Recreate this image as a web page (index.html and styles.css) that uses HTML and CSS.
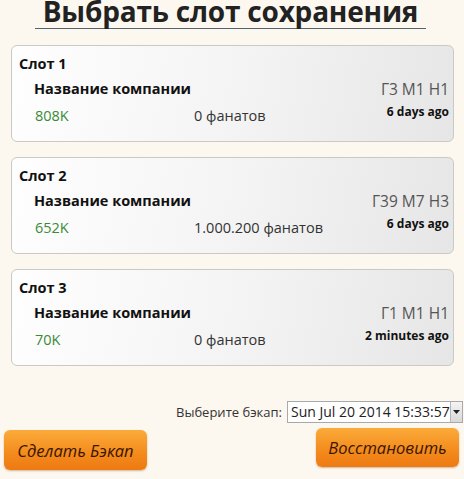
FILE: index.html
```html
<!DOCTYPE html>
<html lang="ru">
<head>
<meta charset="utf-8">
<link rel="stylesheet" href="styles.css">
</head>
<body>
<div class="page">
  <h1 class="title">Выбрать слот сохранения</h1>
  <div class="slots">
    <div class="slot">
      <div class="slot-name">Слот 1</div>
      <div class="row">
        <span class="company">Название компании</span>
        <span class="date">Г3 М1 Н1</span>
      </div>
      <div class="row stats">
        <span class="money">808K</span>
        <span class="fans">0 фанатов</span>
        <span class="ago">6 days ago</span>
      </div>
    </div>
    <div class="slot">
      <div class="slot-name">Слот 2</div>
      <div class="row">
        <span class="company">Название компании</span>
        <span class="date">Г39 М7 Н3</span>
      </div>
      <div class="row stats">
        <span class="money">652K</span>
        <span class="fans">1.000.200 фанатов</span>
        <span class="ago">6 days ago</span>
      </div>
    </div>
    <div class="slot">
      <div class="slot-name">Слот 3</div>
      <div class="row">
        <span class="company">Название компании</span>
        <span class="date">Г1 М1 Н1</span>
      </div>
      <div class="row stats">
        <span class="money">70K</span>
        <span class="fans">0 фанатов</span>
        <span class="ago">2 minutes ago</span>
      </div>
    </div>
  </div>
  <div class="backup">
    <label class="backup-label">Выберите бэкап:</label>
    <div class="select">
      <span class="select-text">Sun Jul 20 2014 15:33:57</span>
      <span class="select-arrow"><svg width="7" height="4" viewBox="0 0 7 4"><path d="M0 0h7L3.5 4z" fill="#222"/></svg></span>
    </div>
  </div>
  <div class="actions">
    <button class="btn btn-left">Сделать Бэкап</button>
    <button class="btn btn-right">Восстановить</button>
  </div>
</div>
</body>
</html>
```
FILE: styles.css
```css
html, body {
  margin: 0;
  padding: 0;
  background: #fdf8ef;
}
body {
  font-family: "Open Sans", "Noto Sans", sans-serif;
  color: #222;
  width: 464px;
  height: 479px;
  overflow: hidden;
}
.page {
  display: flex;
  flex-direction: column;
}
.title {
  margin: 0 38px 0 35px;
  padding-bottom: 5px;
  font-size: 28px;
  font-weight: 700;
  line-height: 23px;
  text-align: center;
  color: #222;
  border-bottom: 1px solid #55636e;
  white-space: nowrap;
  letter-spacing: -0.2px;
}
.slots {
  display: flex;
  flex-direction: column;
  gap: 15px;
  margin: 16px 10px 0 11px;
}
.slot {
  border: 1px solid #c9c9c6;
  border-radius: 6px;
  background: linear-gradient(100deg, #fefefe 0%, #f4f4f4 50%, #e6e6e6 100%);
  padding: 8px 4px 15px 7px;
  height: 72px;
}
.slot-name {
  font-size: 14.5px;
  font-weight: 700;
  line-height: 20px;
  color: #111;
}
.row {
  display: flex;
  align-items: center;
  justify-content: space-between;
  padding-left: 15px;
  margin-top: 5px;
  line-height: 20px;
}
.company {
  font-size: 14.5px;
  font-weight: 700;
  color: #111;
}
.date {
  font-size: 15.5px;
  color: #555;
}
.stats {
  display: grid;
  grid-template-columns: 159px 1fr auto;
  margin-top: 7px;
  padding-left: 16px;
}
.money {
  font-size: 14.5px;
  color: #3a8a38;
}
.fans {
  font-size: 14.5px;
  color: #333;
}
.ago {
  font-size: 12px;
  font-weight: 700;
  color: #111;
  position: relative;
  top: -4px;
}
.backup {
  display: flex;
  justify-content: flex-end;
  align-items: center;
  gap: 5px;
  margin-top: 35px;
  padding-right: 1px;
}
.backup-label {
  font-size: 13px;
  color: #333;
}
.select {
  display: flex;
  align-items: stretch;
  height: 22px;
  width: 176px;
  box-sizing: border-box;
  border: 1px solid #a9a9a9;
  background: #fff;
}
.select-text {
  flex: 1;
  font-size: 14px;
  line-height: 20px;
  padding-left: 3px;
  color: #222;
  white-space: nowrap;
}
.select-arrow {
  width: 11px;
  display: flex;
  align-items: center;
  justify-content: center;
  background: linear-gradient(#f4f4f4, #d8d8d8);
  border-left: 1px solid #b5b5b5;
}
.actions {
  display: flex;
  justify-content: space-between;
  align-items: flex-start;
  margin-top: 5px;
  padding: 0 5px 0 4px;
}
.btn {
  width: 143px;
  height: 40px;
  border: none;
  border-radius: 6px;
  background: linear-gradient(#fbab3a, #f38a1c 60%, #ee7a12);
  box-shadow: 0 1px 2px rgba(120, 60, 0, 0.35);
  font-family: "Open Sans", "Noto Sans", sans-serif;
  font-style: italic;
  font-size: 16.5px;
  color: #3a1500;
  padding: 0;
}
.btn-left {
  margin-top: 2px;
}
.btn-right {
  height: 39px;
}
```
